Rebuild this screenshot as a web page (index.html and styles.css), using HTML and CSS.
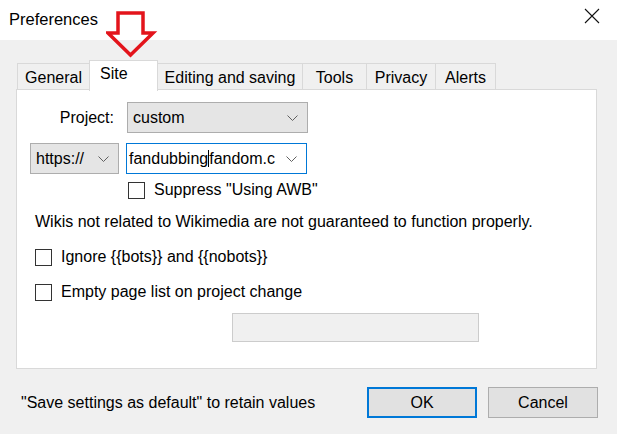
FILE: index.html
```html
<!DOCTYPE html>
<html>
<head>
<meta charset="utf-8">
<link rel="stylesheet" href="styles.css">
</head>
<body>
<div class="window">
  <div class="titlebar">
    <span class="title">Preferences</span>
    <svg class="close" width="16" height="16" viewBox="0 0 16 16"><path d="M1 1L15 15M15 1L1 15" stroke="#111" stroke-width="1.1" fill="none"/></svg>
  </div>
  <div class="client">
    <div class="tabs">
      <div class="tab t-general">General</div>
      <div class="tab t-site selected">Site</div>
      <div class="tab t-edit">Editing and saving</div>
      <div class="tab t-tools">Tools</div>
      <div class="tab t-privacy">Privacy</div>
      <div class="tab t-alerts">Alerts</div>
    </div>
    <div class="panel">
      <div class="row row-project">
        <span class="label">Project:</span>
        <div class="combo gray wide"><span>custom</span><svg class="chev" width="11" height="6" viewBox="0 0 11 6"><path d="M0.5 0.5L5.5 5.5L10.5 0.5" stroke="#606060" fill="none"/></svg></div>
      </div>
      <div class="row row-site">
        <div class="combo gray proto"><span>https://</span><svg class="chev" width="11" height="6" viewBox="0 0 11 6"><path d="M0.5 0.5L5.5 5.5L10.5 0.5" stroke="#606060" fill="none"/></svg></div>
        <div class="combo edit wide"><span>fandubbing<i class="caret"></i>fandom.c</span><svg class="chev" width="11" height="6" viewBox="0 0 11 6"><path d="M0.5 0.5L5.5 5.5L10.5 0.5" stroke="#606060" fill="none"/></svg></div>
      </div>
      <div class="check suppress"><span class="box"></span><span>Suppress "Using AWB"</span></div>
      <p class="note">Wikis not related to Wikimedia are not guaranteed to function properly.</p>
      <div class="check c-ignore"><span class="box"></span><span>Ignore {{bots}} and {{nobots}}</span></div>
      <div class="check c-empty"><span class="box"></span><span>Empty page list on project change</span></div>
      <div class="disabled-box"></div>
    </div>
    <div class="footer">
      <span class="hint">"Save settings as default" to retain values</span>
      <div class="btn ok">OK</div>
      <div class="btn cancel">Cancel</div>
    </div>
  </div>
  <svg class="arrow-down" width="52" height="50" viewBox="0 0 52 50"><path d="M12 2H37V22H47L24.5 44L2 22H12Z" fill="none" stroke="#e3141b" stroke-width="3.5" stroke-linejoin="miter"/></svg>
  <svg class="arrow-left" width="70" height="48" viewBox="0 0 70 48"><path d="M2 22L32 2V11H63V33H32V42Z" fill="none" stroke="#e3141b" stroke-width="3.5" stroke-linejoin="miter"/></svg>
</div>
</body>
</html>
```
FILE: styles.css
```css
* { box-sizing: border-box; }
html, body { margin: 0; padding: 0; }
body {
  width: 617px;
  height: 434px;
  overflow: hidden;
  font-family: "Liberation Sans", Arial, sans-serif;
  font-size: 16px;
  line-height: 18px;
  color: #000;
  background: #f0f0f0;
}
.window { position: relative; width: 617px; height: 434px; }
.titlebar {
  height: 40px;
  background: #fff;
  display: flex;
  align-items: center;
  justify-content: space-between;
  padding: 0 17px 2px 9px;
}
.title { font-size: 16.5px; }
.close { display: block; margin-top: -6px; }
.client { padding-top: 19px; }
.tabs {
  display: flex;
  align-items: flex-end;
  margin-left: 17px;
  height: 30px;
}
.tab {
  height: 27px;
  border: 1px solid #d9d9d9;
  border-bottom: none;
  margin-left: -1px;
  display: flex;
  align-items: center;
  justify-content: center;
  background: #f0f0f0;
  padding-top: 1px;
  margin-bottom: -1px;
}
.tab.selected {
  height: 31px;
  background: #fff;
  position: relative;
  z-index: 2;
  align-items: flex-start;
  padding-top: 4px;
  justify-content: flex-start;
  padding-left: 10px;
  margin-bottom: -2px;
}
.t-general { width: 73px; margin-left: 0; }
.t-site { width: 69px; }
.t-edit { width: 146px; }
.t-tools { width: 65px; }
.t-privacy { width: 70px; }
.t-alerts { width: 61px; }
.panel {
  position: relative;
  z-index: 1;
  margin-left: 16px;
  width: 581px;
  height: 280px;
  background: #fff;
  border: 1px solid #d9d9d9;
  padding: 12px 0 0 13px;
}
.row { display: flex; align-items: center; }
.label { width: 97px; text-align: right; padding-right: 13px; }
.combo {
  height: 31px;
  border: 1px solid #adadad;
  display: flex;
  align-items: center;
  justify-content: space-between;
  padding: 0 9px 0 5px;
}
.combo.gray { background: #e5e5e5; }
.combo.edit { background: #fff; border-color: #0078d7; padding-left: 2px; }
.combo.wide { width: 181px; }
.combo.proto { width: 89px; margin-right: 7px; }
.row-site { margin-top: 10px; }
.caret { display: inline-block; width: 1px; height: 17px; background: #000; vertical-align: -3px; }
.check { display: flex; align-items: center; height: 18px; }
.box {
  width: 17px;
  height: 17px;
  border: 1px solid #333;
  background: #fff;
  margin-right: 9px;
}
.suppress { margin: 7px 0 0 98px; }
.note { margin: 14px 0 0 5px; }
.c-ignore { margin: 17px 0 0 5px; }
.c-empty { margin: 17px 0 0 5px; }
.disabled-box {
  margin: 12px 0 0 202px;
  width: 247px;
  height: 29px;
  border: 1px solid #cccccc;
  background: #f0f0f0;
}
.footer {
  display: flex;
  align-items: center;
  padding: 18px 0 0 21px;
}
.hint { width: 346px; }
.btn {
  height: 31px;
  display: flex;
  align-items: center;
  justify-content: center;
  background: #e1e1e1;
  border: 1px solid #adadad;
}
.btn.ok { width: 110px; border: 2px solid #0078d7; }
.btn.cancel { width: 110px; margin-left: 11px; }
.arrow-down { position: absolute; left: 106px; top: 11px; }
.arrow-left { position: absolute; left: 320px; top: 136px; }
```
